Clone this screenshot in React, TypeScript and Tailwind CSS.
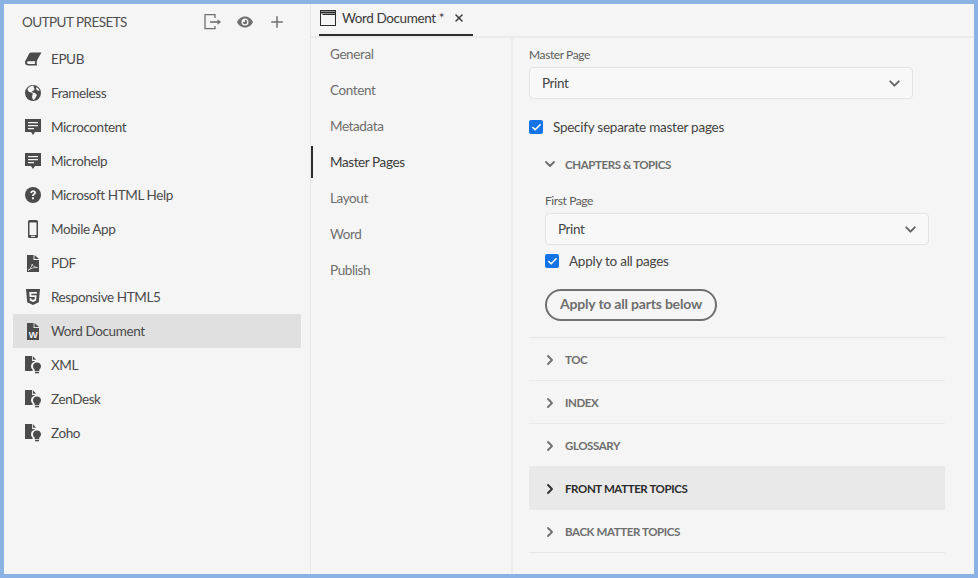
import { ChevronDown, ChevronRight, Plus, X, Check } from 'lucide-react'
import type { ReactNode } from 'react'

function Svg({ children, className = 'w-[18px] h-[18px]' }: { children: ReactNode; className?: string }) {
  return (
    <svg viewBox="0 0 18 18" className={className} fill="#4b4b4b">
      {children}
    </svg>
  )
}

const EpubIcon = () => (
  <Svg>
    <path d="M7 2.500h10.500L14 8.500c-1.300 2.200-1.800 4.500-.8 7H4.500C2.300 15.500 1 14.200 1 12.500c0-1 .4-1.900 1-2.800l2.200-4.200C5 3.800 5.800 2.500 7 2.500Z" />
    <path d="M4.500 11.300h6.800c-.5 1-.6 1.900-.4 2.700H4.500C3.500 14 3 13.300 3 12.600c0-.7.500-1.300 1.500-1.300Z" fill="#f5f5f5" />
  </Svg>
)
const GlobeIcon = () => (
  <Svg>
    <path fillRule="evenodd" d="M9 1a8 8 0 1 1 0 16A8 8 0 0 1 9 1ZM6 2.500 4 4l-.5 2L5 8l2.500.5L9 10l-1 2 .5 3 1.500 1 2-3 1-2-2-2-2.500-.5-.5-1.500 2-.5.5-1.500L9.500 3l.5-1L8 1.800ZM12.500 3l-.5 2 1.500 1.500 2 .5c-.3-1.500-1.500-3.200-3-4Z" />
  </Svg>
)
const ChatIcon = () => (
  <Svg>
    <path fillRule="evenodd" d="M1 1h16v13h-6l-2 3-2-3H1ZM4 4v1.200h10V4Zm0 3v1.200h10V7Zm0 3v1.200h6V10Z" />
  </Svg>
)
const HelpIcon = () => (
  <Svg>
    <circle cx="9" cy="9" r="8" />
    <path d="M6.300 7c.1-1.800 1.300-2.800 2.900-2.800 1.700 0 2.800 1 2.800 2.400 0 1.200-.7 1.800-1.500 2.300-.5.3-.7.600-.7 1.200H8c0-1.200.4-1.800 1.200-2.300.6-.4.900-.7.900-1.100 0-.5-.4-.8-1-.8s-1 .4-1.100 1.100ZM8 11.300h1.900v2H8Z" fill="#f5f5f5" />
  </Svg>
)
const PhoneIcon = () => (
  <Svg>
    <path fillRule="evenodd" d="M5.500 0h7A1.500 1.500 0 0 1 14 1.500v15a1.500 1.500 0 0 1-1.500 1.500h-7A1.500 1.500 0 0 1 4 16.500v-15A1.500 1.500 0 0 1 5.500 0Zm0 2.500v12.500h7V2.500Z" />
    <rect x="7" y="15.800" width="4" height="1.100" fill="#f5f5f5" />
  </Svg>
)
const PdfIcon = () => (
  <Svg>
    <path d="M3 1h6.500v5H15v12H3Z" />
    <path d="M10.500 1 15 5h-4.500Z" />
    <path d="M4 16.500c2-1 3.500-3.500 4.200-6.500.5 2 2 3.300 5.300 3.500-3-.3-6.500.6-9.500 3Z" fill="none" stroke="#f5f5f5" strokeWidth=".7" />
  </Svg>
)
const Html5Icon = () => (
  <Svg>
    <path fillRule="evenodd" d="M2 1h14l-1.200 13.300L9 17l-5.800-2.700ZM5.200 4l.4 5h5.200l-.2 2.200-1.600.6-1.600-.6-.1-1H5.700l.2 2.600L9 14l3.100-1.200.5-5.600H7.400l-.1-1.400h5.500l.2-1.800Z" />
  </Svg>
)
const WordIcon = () => (
  <Svg>
    <path d="M3 1h6.500v5H15v12H3Z" />
    <path d="M10.500 1 15 5h-4.500Z" />
    <text x="9" y="16" textAnchor="middle" fontSize="9.500" fontWeight="700" fill="#f5f5f5" fontFamily="Liberation Sans">W</text>
  </Svg>
)
const BulbDocIcon = () => (
  <Svg className="w-[18px] h-[20px]">
    <path d="M1 0h7v5h3l-.6.7C8 6.300 7 8.300 7 10.200c0 1.300.6 2.500 1.600 3.400v1.400H1Z" />
    <path d="M8.800 0 12 3.800H8.800Z" />
    <path d="M13 6.500c2.400 0 4 1.700 4 3.700 0 1.500-.9 2.600-1.700 3.400v1.600h-4.600v-1.600C9.900 12.800 9 11.700 9 10.200c0-2 1.600-3.700 4-3.700Z" />
    <rect x="11" y="16" width="4" height="1.300" />
  </Svg>
)

const PRESETS: { name: string; icon: ReactNode; active?: boolean }[] = [
  { name: 'EPUB', icon: <EpubIcon /> },
  { name: 'Frameless', icon: <GlobeIcon /> },
  { name: 'Microcontent', icon: <ChatIcon /> },
  { name: 'Microhelp', icon: <ChatIcon /> },
  { name: 'Microsoft HTML Help', icon: <HelpIcon /> },
  { name: 'Mobile App', icon: <PhoneIcon /> },
  { name: 'PDF', icon: <PdfIcon /> },
  { name: 'Responsive HTML5', icon: <Html5Icon /> },
  { name: 'Word Document', icon: <WordIcon />, active: true },
  { name: 'XML', icon: <BulbDocIcon /> },
  { name: 'ZenDesk', icon: <BulbDocIcon /> },
  { name: 'Zoho', icon: <BulbDocIcon /> },
]

const NAV = ['General', 'Content', 'Metadata', 'Master Pages', 'Layout', 'Word', 'Publish']

function Select({ value, className = '' }: { value: string; className?: string }) {
  return (
    <div className={`flex h-8 w-[384px] items-center justify-between rounded-[4px] border border-[#e3e3e3] bg-[#f8f8f8] pl-3 pr-[9px] text-[13.5px] text-[#444] ${className}`}>
      <span>{value}</span>
      <ChevronDown size={17} strokeWidth={2.75} className="text-[#666]" />
    </div>
  )
}

function Checkbox({ label }: { label: string }) {
  return (
    <div className="flex items-center gap-[10px] text-[13.5px] tracking-[-0.25px] text-[#444]">
      <div className="flex h-[14px] w-[14px] items-center justify-center rounded-[2px] bg-[#1473e6]">
        <Check size={11} strokeWidth={3.5} className="text-white" />
      </div>
      <span>{label}</span>
    </div>
  )
}

function Section({ label, active }: { label: string; active?: boolean }) {
  return (
    <div className={`flex h-[43px] items-center gap-[7px] pt-[2px] pl-[13px] text-[11.5px] font-bold ${active ? 'bg-[#e9e9e9] text-[#2c2c2c]' : 'text-[#6e6e6e]'}`}>
      <ChevronRight size={16} strokeWidth={2.75} />
      <span>{label}</span>
    </div>
  )
}

export default function App() {
  return (
    <div className="h-[578px] w-[978px] overflow-hidden border-4 border-[#8ab2e2] bg-[#f5f5f5] font-['Lato','Open_Sans',sans-serif] tracking-[-0.4px]">
      <div className="flex h-full">
        <aside className="w-[307px] shrink-0 border-r border-[#e8e8e8] px-[9px]">
          <div className="flex h-[38px] items-center justify-between pr-[15px] pb-[2px] pl-[9px]">
            <span className="text-[13.5px] tracking-[-0.55px] text-[#505050]">OUTPUT PRESETS</span>
            <div className="flex items-center gap-[14px] text-[#707070]">
              <svg viewBox="0 0 18 18" className="h-[18px] w-[18px]" fill="none" stroke="#707070" strokeWidth="1.300">
                <path d="M11 5V1.700H1v14h10V13" />
                <path d="M6 9h10" strokeWidth="1.600" />
                <path d="m13.500 6.200 3.500 2.800-3.500 2.800Z" fill="#707070" stroke="none" />
              </svg>
              <svg viewBox="0 0 18 18" className="h-[18px] w-[18px]">
                <path fillRule="evenodd" fill="#707070" d="M9 3.500c3.800 0 6.800 2.500 8 5.500-1.200 3-4.200 5.500-8 5.500S2.200 12 1 9c1.200-3 4.200-5.500 8-5.500Zm0 2a3.500 3.500 0 1 0 0 7 3.500 3.500 0 0 0 0-7Z" />
                <path fill="#707070" d="M9 6.800a2.200 2.200 0 1 1-2.200 2.200H9Z" />
              </svg>
              <Plus size={18} strokeWidth={2} />
            </div>
          </div>
          {PRESETS.map((p) => (
            <div key={p.name} className={`flex h-[34px] items-center text-[13.5px] text-[#4a4a4a] ${p.active ? 'bg-[#e0e0e0]' : ''}`}>
              <div className="flex w-[38px] shrink-0 justify-center pl-[1px]">{p.icon}</div>
              <span>{p.name}</span>
            </div>
          ))}
        </aside>

        <div className="flex min-w-0 flex-1 flex-col">
          <div className="flex h-[34px] shrink-0 border-b-2 border-[#ebebeb]">
            <div className="ml-[8px] flex h-[32px] w-[154px] items-start gap-[6px] border-b-2 border-[#2c2c2c] pt-[6px] pl-[1px] text-[13.5px] whitespace-nowrap text-[#3a3a3a]">
              <svg viewBox="0 0 16 16" className="h-[16px] w-[16px] shrink-0" fill="none" stroke="#2c2c2c">
                <rect x=".5" y=".5" width="15" height="15" />
                <path d="M.5 2.500h15" strokeWidth="2" />
                <path d="M2.500 4.500h13" />
              </svg>
              <span className="leading-[16px]">Word Document *</span>
              <X size={12} strokeWidth={3} className="mt-[2px] ml-[3px] shrink-0" />
            </div>
          </div>
          <div className="flex min-h-0 flex-1">
            <nav className="w-[202px] shrink-0 border-r-2 border-[#ebebeb] text-[13.5px] text-[#6e6e6e]">
              <div className="-mt-[2px]">
                {NAV.map((n) => (
                  <div key={n} className={`flex h-9 items-center pl-[19px] ${n === 'Master Pages' ? 'relative text-[#3a3a3a]' : ''}`}>
                    {n === 'Master Pages' && <span className="absolute top-[2px] left-0 h-8 w-[2px] bg-[#2c2c2c]" />}
                    {n}
                  </div>
                ))}
              </div>
            </nav>
            <main className="min-w-0 flex-1 pt-[9px] pr-[29px] pl-[16px]">
              <div className="text-xs leading-[16px] text-[#5c5c5c]">Master Page</div>
              <Select value="Print" className="mt-[4px]" />
              <div className="mt-[18px]">
                <Checkbox label="Specify separate master pages" />
              </div>
              <div className="mt-[19px] flex h-[16px] items-center gap-[7px] pl-[13px] text-[11.5px] font-bold text-[#6e6e6e]">
                <ChevronDown size={16} strokeWidth={2.75} />
                <span>CHAPTERS &amp; TOPICS</span>
              </div>
              <div className="pl-[16px]">
                <div className="mt-[21px] text-xs leading-[16px] text-[#5c5c5c]">First Page</div>
                <Select value="Print" className="mt-[4px]" />
                <div className="mt-[6px]">
                  <Checkbox label="Apply to all pages" />
                </div>
                <div className="mt-[17px] flex h-8 w-[172px] items-center justify-center rounded-full border-2 border-[#707070] pb-px text-sm font-bold tracking-[-0.2px] text-[#6e6e6e]">
                  Apply to all parts below
                </div>
              </div>
              <div className="mt-4 border-t border-[#e6e6e6]" />
              <div className="divide-y divide-[#e9e9e9]">
                <Section label="TOC" />
                <Section label="INDEX" />
                <Section label="GLOSSARY" />
                <Section label="FRONT MATTER TOPICS" active />
                <Section label="BACK MATTER TOPICS" />
              </div>
              <div className="-mt-px border-t border-[#e6e6e6]" />
            </main>
          </div>
        </div>
      </div>
    </div>
  )
}
